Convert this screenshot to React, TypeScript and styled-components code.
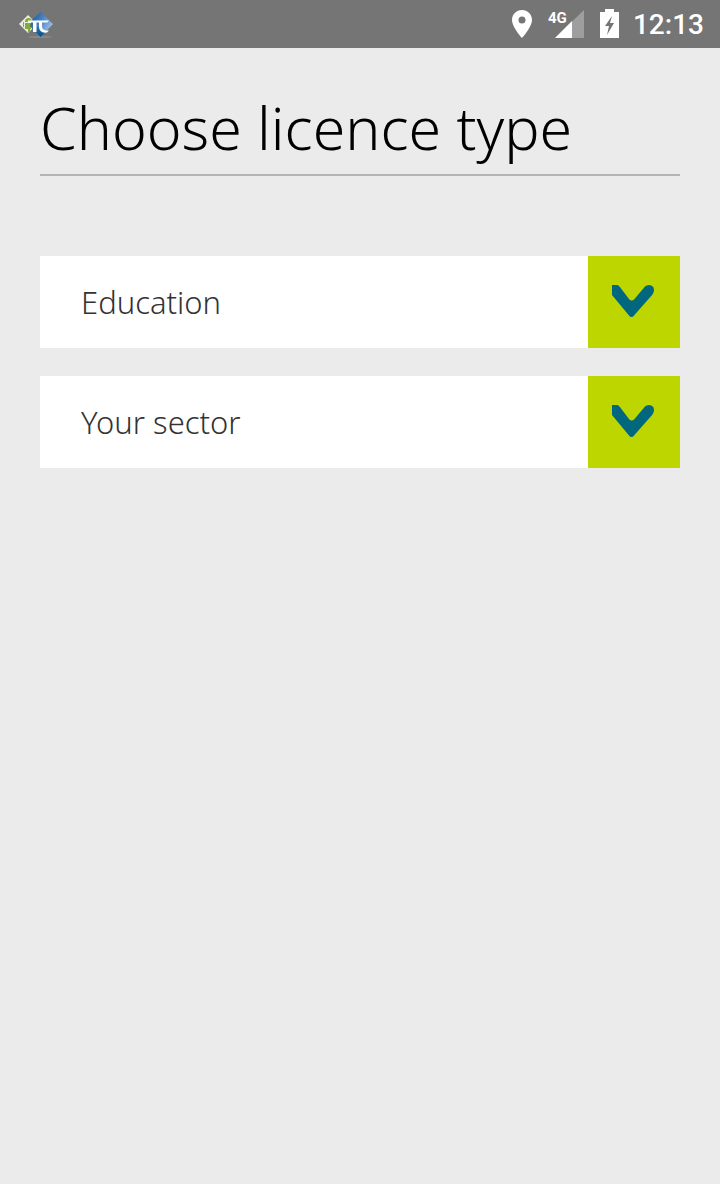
import React from "react";
import styled, { createGlobalStyle } from "styled-components";

const GlobalStyle = createGlobalStyle`
  * { box-sizing: border-box; }
  body {
    margin: 0;
    background: #ebebeb;
    color: #000;
    font-family: "Noto Sans", "Open Sans", sans-serif;
    font-weight: 300;
  }
`;

const StatusBar = styled.header`
  display: flex;
  align-items: center;
  height: 48px;
  padding: 0 16px 0 18px;
  background: #757575;
  color: #fff;
`;

const StatusIcons = styled.div`
  display: flex;
  align-items: center;
  gap: 14px;
  margin-left: auto;
`;

const Icon = styled.svg`
  display: block;
  flex: none;
`;

const NetworkLabel = styled.text`
  font: 700 15px Roboto, sans-serif;
  fill: #fff;
`;

const Clock = styled.time`
  padding-top: 2px;
  font: 500 28px/46px Roboto, sans-serif;
`;

const Page = styled.main`
  padding: 48px 40px;
`;

const Title = styled.h1`
  height: 80px;
  margin: 0 0 80px;
  border-bottom: 2px solid #b4b4b4;
  font-size: 59px;
  line-height: 62px;
  font-weight: 300;
  white-space: nowrap;
`;

const Form = styled.form`
  display: grid;
  gap: 28px;
`;

const Field = styled.div`
  display: grid;
  grid-template-columns: 1fr 92px;
  height: 92px;
`;

const Select = styled.select`
  grid-area: 1 / 1 / 2 / 3;
  appearance: none;
  min-width: 0;
  padding: 0 132px 0 41px;
  border: 0;
  border-radius: 0;
  background: #fff;
  color: #333;
  font: inherit;
  font-size: 31px;
  line-height: 44px;
`;

const Arrow = styled.span`
  grid-area: 1 / 2;
  z-index: 1;
  padding: 29px 24px;
  background: #bed600;
  pointer-events: none;
`;

function AppLogo() {
  return (
    <Icon width="36" height="30" viewBox="0 0 36 30" aria-hidden="true">
      <defs>
        <linearGradient id="blue" x1="0" y1="0" x2="1" y2="0.6">
          <stop offset="0.2" stopColor="#2465a6" />
          <stop offset="0.5" stopColor="#4a80c0" />
          <stop offset="1" stopColor="#a5c6e8" />
        </linearGradient>
        <linearGradient id="deep" x1="0" y1="0" x2="0" y2="1">
          <stop offset="0" stopColor="#2a74b4" />
          <stop offset="1" stopColor="#064b82" />
        </linearGradient>
      </defs>
      <ellipse cx="22" cy="28" rx="12" ry="1" fill="#888" />
      <path d="M1 15 10 6l9 9-9 9z" fill="#e9ece5" />
      <path d="M7 13q0-4 3.500-4t3.500 4zM5 13h1v5H5zM7 14h6v6h-1v3h-2v-3H7z" fill="#83ad32" />
      <path d="M14 11 22.500 3 35 15 22.500 28 12 17z" fill="url(#blue)" />
      <path d="M13 18h8q1 5 9 3l-7.500 7z" fill="url(#deep)" />
      <path
        d="M10 11.500h21l-2 2H24v4q0 4.500 7 4l-2 2q-8 1-8-6v-4h-2.500v9.500h-3.500v-9.500h-5z"
        fill="#fff"
      />
    </Icon>
  );
}

function LocationIcon() {
  return (
    <Icon width="22" height="30" viewBox="0 0 22 30" aria-hidden="true">
      <path
        d="M10 1C4.300 1 0 5.400 0 11c0 7 10 18 10 18s10-11 10-18c0-5.600-4.300-10-10-10zm0 6.500a3.500 3.500 0 1 1 0 7 3.500 3.500 0 0 1 0-7z"
        fill="#fff"
      />
    </Icon>
  );
}

function SignalIcon() {
  return (
    <Icon width="37" height="30" viewBox="0 0 37 30" role="img" aria-label="4G signal">
      <path d="M7 29 36 1v28z" fill="#9e9e9e" />
      <path d="M7 29 24 12v17z" fill="#fff" />
      <NetworkLabel x="0" y="14">4G</NetworkLabel>
    </Icon>
  );
}

function BatteryIcon() {
  return (
    <Icon width="20" height="30" viewBox="0 0 20 30" role="img" aria-label="Battery charging">
      <path d="M6 0h9v3h5v26H1V3h5z" fill="#fff" />
      <path d="M13 7 6 17h4l-2 9 7-12h-4z" fill="#757575" />
    </Icon>
  );
}

function ChevronIcon() {
  return (
    <Icon width="42" height="33" viewBox="0 0 42 33" aria-hidden="true">
      <path
        d="M0 0h5q1.500 0 2.500 1.500L17 14q2.500 3 5.500 0L33 1.500Q34.500 0 37 0q5 .5 5 5 0 2.500-1.500 4.500L22 30.500q-2.500 3-5 0L0 10z"
        fill="#00677f"
      />
    </Icon>
  );
}

function SelectField({ name, label, value }: { name: string; label: string; value: string }) {
  return (
    <Field>
      <Select name={name} aria-label={label} defaultValue={value}>
        <option value={value}>{value}</option>
      </Select>
      <Arrow>
        <ChevronIcon />
      </Arrow>
    </Field>
  );
}

export default function App() {
  return (
    <>
      <GlobalStyle />
      <StatusBar>
        <AppLogo />
        <StatusIcons>
          <LocationIcon />
          <SignalIcon />
          <BatteryIcon />
          <Clock>12:13</Clock>
        </StatusIcons>
      </StatusBar>
      <Page>
        <Title>Choose licence type</Title>
        <Form>
          <SelectField name="licence" label="Licence type" value="Education" />
          <SelectField name="sector" label="Sector" value="Your sector" />
        </Form>
      </Page>
    </>
  );
}
